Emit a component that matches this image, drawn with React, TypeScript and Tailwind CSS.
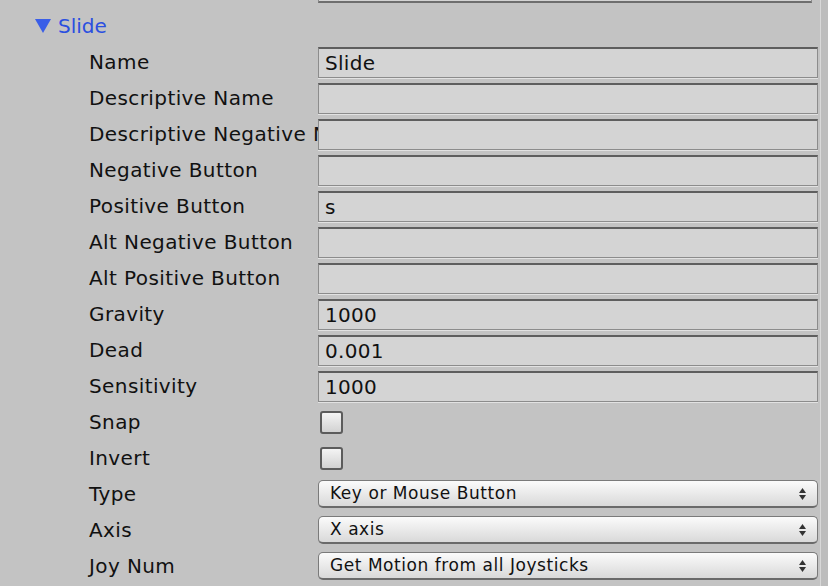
import React from 'react';

type Row =
  | { label: string; kind: 'text'; value?: string }
  | { label: string; kind: 'check' }
  | { label: string; kind: 'popup'; value: string };

const rows: Row[] = [
  { label: 'Name', kind: 'text', value: 'Slide' },
  { label: 'Descriptive Name', kind: 'text' },
  { label: 'Descriptive Negative Name', kind: 'text' },
  { label: 'Negative Button', kind: 'text' },
  { label: 'Positive Button', kind: 'text', value: 's' },
  { label: 'Alt Negative Button', kind: 'text' },
  { label: 'Alt Positive Button', kind: 'text' },
  { label: 'Gravity', kind: 'text', value: '1000' },
  { label: 'Dead', kind: 'text', value: '0.001' },
  { label: 'Sensitivity', kind: 'text', value: '1000' },
  { label: 'Snap', kind: 'check' },
  { label: 'Invert', kind: 'check' },
  { label: 'Type', kind: 'popup', value: 'Key or Mouse Button' },
  { label: 'Axis', kind: 'popup', value: 'X axis' },
  { label: 'Joy Num', kind: 'popup', value: 'Get Motion from all Joysticks' },
];

const TextField = ({ value }: { value?: string }) => (
  <div className="w-[500px] h-[31px] bg-[#d4d4d4] border border-[#8c8c8c] border-t-2 border-t-[#5e5e5e] shadow-[0_1px_0_#e2e2e2] flex items-center pl-[6px] text-[20px] tracking-[0.3px] text-[#111]">
    {value}
  </div>
);

const Checkbox = () => (
  <div className="ml-[2px] w-[23px] h-[23px] rounded-[3px] border-2 border-[#5c5c5c] bg-gradient-to-b from-[#f4f4f4] to-[#d2d2d2]" />
);

const Stepper = () => (
  <svg width="9" height="14" viewBox="0 0 9 14">
    <path d="M4.5 1 L8 6 H1 Z" fill="#333" />
    <path d="M4.5 13 L8 8 H1 Z" fill="#333" />
  </svg>
);

const Popup = ({ value }: { value: string }) => (
  <div className="w-[500px] h-[28px] rounded-[5px] border border-[#7a7a7a] border-b-2 border-b-[#6a6a6a] bg-gradient-to-b from-[#fbfbfb] to-[#d9d9d9] flex items-center justify-between pl-[11px] pr-[10px] text-[17px] tracking-[0.55px] text-[#111]">
    <span>{value}</span>
    <Stepper />
  </div>
);

export default function App() {
  return (
    <div
      className="w-[828px] h-[586px] overflow-hidden bg-[#c3c3c3] flex"
      style={{ fontFamily: '"DejaVu Sans", sans-serif' }}
    >
      <div className="w-[820px] flex flex-col">
        {/* previous field, cut off at the top */}
        <div className="h-[8px] overflow-hidden flex items-end pb-[5px] pl-[318px]">
          <div className="shrink-0 w-[494px] h-[31px] bg-[#d4d4d4] border border-[#8c8c8c] border-b-2 border-b-[#6e6e6e]" />
        </div>

        {/* foldout header */}
        <div className="h-[36px] flex items-center pl-[35px] gap-[7px]">
          <svg width="16" height="14" viewBox="0 0 16 14">
            <path d="M0 0 H16 L8 14 Z" fill="#3a5ee8" />
          </svg>
          <span className="text-[20px] text-[#2a4fe0]">Slide</span>
        </div>

        {rows.map((r) => (
          <div key={r.label} className="h-[36px] flex items-center shrink-0">
            <div className="w-[318px] pl-[89px] pr-[2px] overflow-hidden whitespace-nowrap text-[20px] tracking-[0.4px] text-[#111]">
              {r.label}
            </div>
            {r.kind === 'text' && <TextField value={r.value} />}
            {r.kind === 'check' && <Checkbox />}
            {r.kind === 'popup' && <Popup value={r.value} />}
          </div>
        ))}
      </div>
      <div className="flex-1 border-l border-[#d8d8d8] bg-[#bdbdbd]" />
    </div>
  );
}
